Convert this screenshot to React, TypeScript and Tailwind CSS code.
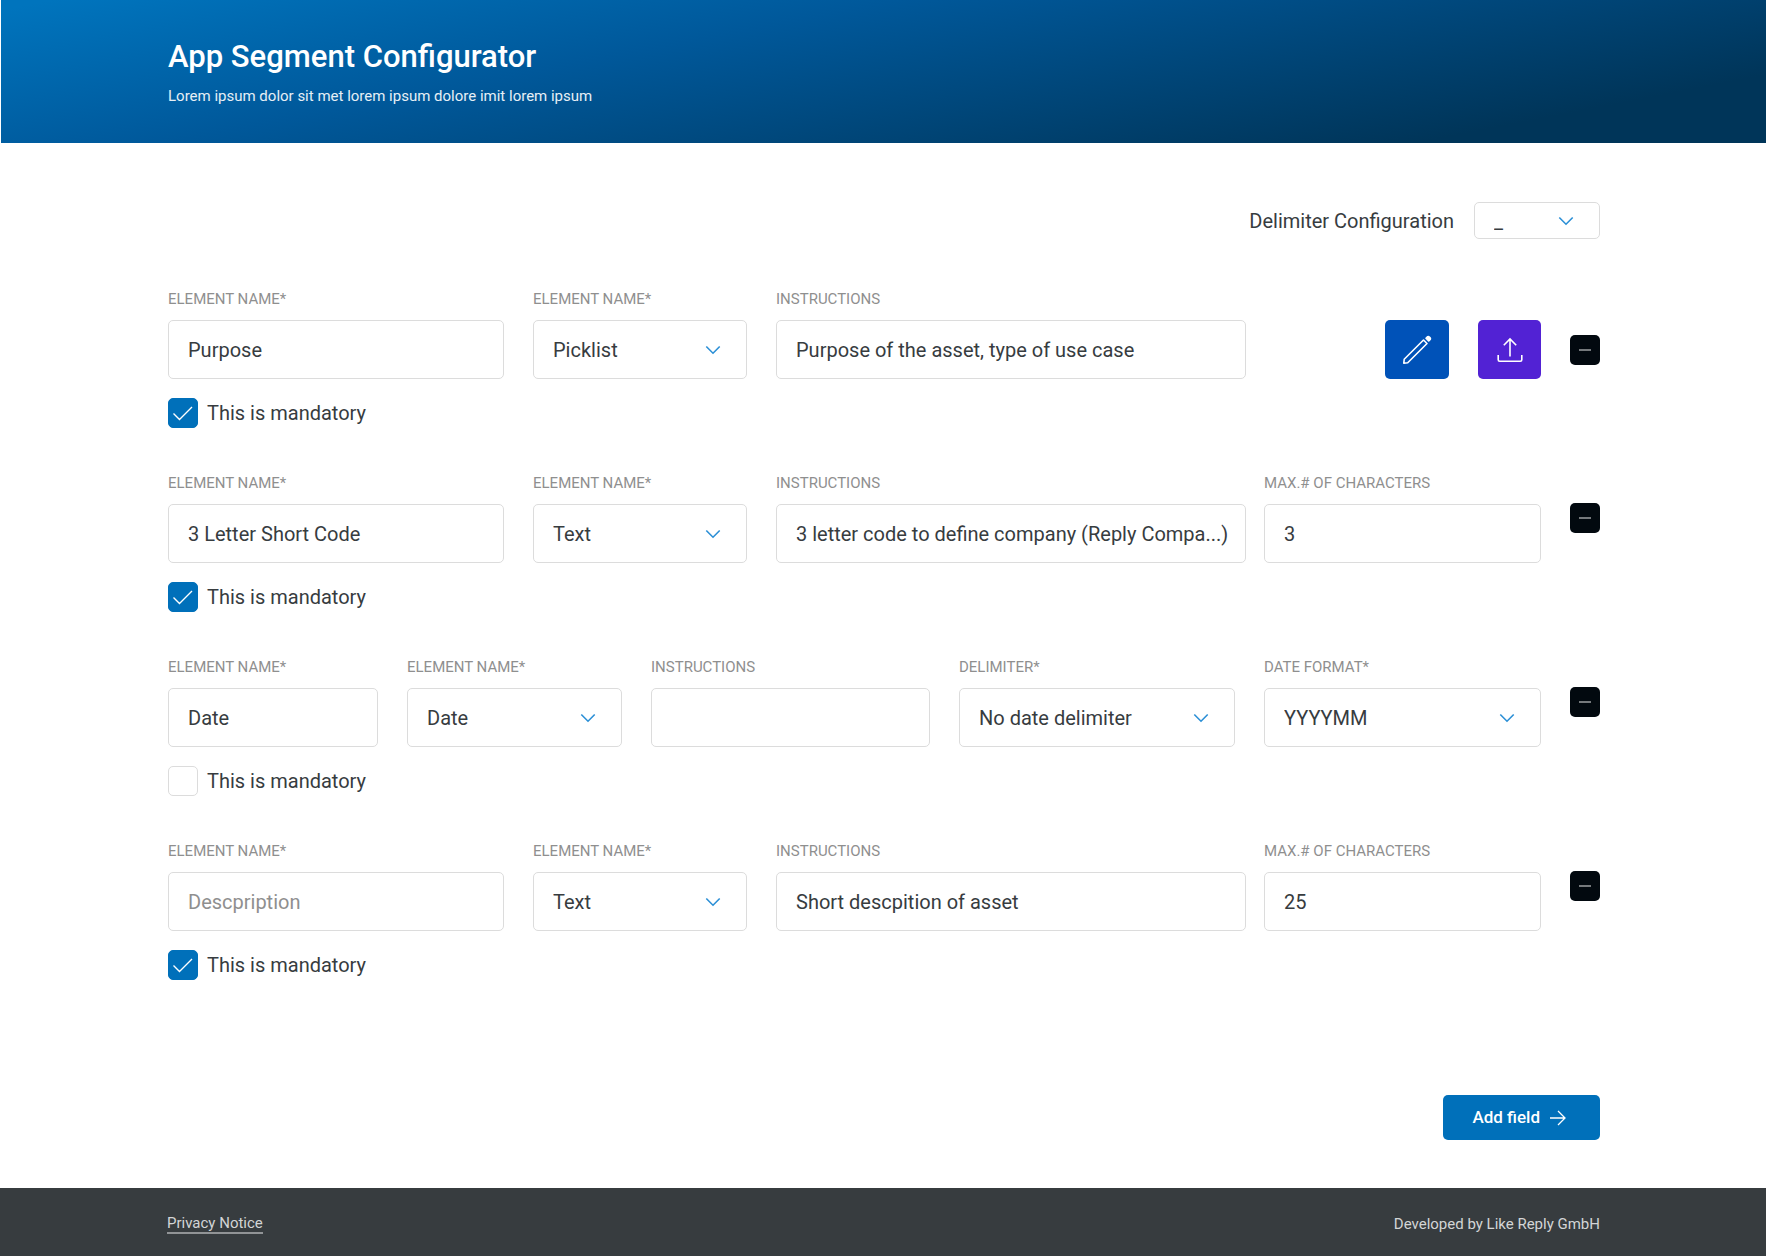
import { useId, useState, type ReactNode } from "react";

const fieldBox =
  "h-[59px] w-full rounded-[5px] border border-[#dcdcdc] bg-white pl-[19px] text-[20px] text-[#373c3f] placeholder:text-[#8f8f8f] focus:outline-2 focus:outline-[#0070ba]";

function Chevron() {
  return (
    <svg
      className="pointer-events-none absolute top-1/2 right-[26px] -translate-y-1/2"
      width="16"
      height="10"
      viewBox="0 0 16 10"
      fill="none"
      stroke="#2b8fd6"
      strokeWidth="1.6"
      aria-hidden="true"
    >
      <path d="M1.300 1.500 8 8.200l6.700-6.700" />
    </svg>
  );
}

function Label({ id, children }: { id: string; children: ReactNode }) {
  return (
    <label htmlFor={id} className="mb-[11px] block text-[15px] leading-5 whitespace-nowrap text-[#8f8f8f]">
      {children}
    </label>
  );
}

function TextField({ label, value = "", placeholder }: { label: string; value?: string; placeholder?: string }) {
  const id = useId();
  return (
    <div>
      <Label id={id}>{label}</Label>
      <input id={id} type="text" defaultValue={value} placeholder={placeholder} className={fieldBox + " pr-4"} />
    </div>
  );
}

function SelectField({ label, value, options }: { label: string; value: string; options: string[] }) {
  const id = useId();
  return (
    <div>
      <Label id={id}>{label}</Label>
      <div className="relative">
        <select id={id} defaultValue={value} className={fieldBox + " appearance-none pr-12"}>
          {options.map((o) => (
            <option key={o}>{o}</option>
          ))}
        </select>
        <Chevron />
      </div>
    </div>
  );
}

const types = ["Picklist", "Text", "Date"];

function RemoveButton() {
  return (
    <button
      type="button"
      aria-label="Remove field"
      className="flex size-[30px] items-center justify-center rounded-[5px] bg-[#02090f]"
    >
      <span className="h-[2px] w-3 bg-[#75797c]" />
    </button>
  );
}

function Mandatory({ initial }: { initial: boolean }) {
  const [checked, setChecked] = useState(initial);
  return (
    <label className="mt-[19px] flex w-fit items-center gap-[9px] text-[20px] leading-[30px] text-[#373c3f]">
      <span className="relative size-[30px]">
        <input
          type="checkbox"
          checked={checked}
          onChange={(e) => setChecked(e.target.checked)}
          className="block size-[30px] appearance-none rounded-[5px] border border-[#dcdcdc] bg-white checked:border-[#0070ba] checked:bg-[#0070ba]"
        />
        {checked && (
          <svg
            className="pointer-events-none absolute inset-0"
            width="30"
            height="30"
            viewBox="0 0 30 30"
            fill="none"
            stroke="#fff"
            strokeWidth="1.4"
            aria-hidden="true"
          >
            <path d="M5.5 15.5 11.5 21.5 24 9" />
          </svg>
        )}
      </span>
      This is mandatory
    </label>
  );
}

function PicklistRow() {
  return (
    <section>
      <div className="grid grid-cols-[336fr_214fr_765fr_30px] gap-[29px]">
        <TextField label="ELEMENT NAME*" value="Purpose" />
        <SelectField label="ELEMENT NAME*" value="Picklist" options={types} />
        <div className="grid grid-cols-[470fr_277fr] gap-[18px]">
          <TextField label="INSTRUCTIONS" value="Purpose of the asset, type of use case" />
          <div className="flex items-end justify-end gap-[29px]">
            <button
              type="button"
              aria-label="Edit picklist"
              className="flex h-[59px] w-16 items-center justify-center rounded-[5px] bg-[#0052b8]"
            >
              <svg
                width="32"
                height="32"
                viewBox="0 0 32 32"
                fill="none"
                stroke="#fff"
                strokeWidth="1.6"
                strokeLinejoin="round"
                aria-hidden="true"
              >
                <path d="M2.800 29.200 3.200 25.300 22.500 6 26 9.500 6.700 28.800Z" />
                <path d="M25 4.300 26.700 2.700Q27.500 2.200 28.300 3L29.200 3.900Q29.800 4.700 29.200 5.500L27.700 7Z" fill="#fff" />
              </svg>
            </button>
            <button
              type="button"
              aria-label="Upload picklist"
              className="flex h-[59px] w-[63px] items-center justify-center rounded-[5px] bg-[#5222d4]"
            >
              <svg width="28" height="28" viewBox="0 0 28 28" fill="none" stroke="#fff" strokeWidth="1.6" aria-hidden="true">
                <path d="M14 20.500V3M7.800 9.200 14 3l6.200 6.200" />
                <path d="M2.200 19v4.800a1.500 1.500 0 0 0 1.500 1.500h20.600a1.500 1.500 0 0 0 1.500-1.500V19" />
              </svg>
            </button>
          </div>
        </div>
        <div className="pt-[46px]">
          <RemoveButton />
        </div>
      </div>
      <Mandatory initial />
    </section>
  );
}

function TextRow({ name, instructions, max }: { name: string; instructions: string; max: string }) {
  return (
    <section>
      <div className="grid grid-cols-[336fr_214fr_765fr_30px] gap-[29px]">
        <TextField label="ELEMENT NAME*" value={name} placeholder="Descpription" />
        <SelectField label="ELEMENT NAME*" value="Text" options={types} />
        <div className="grid grid-cols-[470fr_277fr] gap-[18px]">
          <TextField label="INSTRUCTIONS" value={instructions} />
          <TextField label="MAX.# OF CHARACTERS" value={max} />
        </div>
        <div className="pt-[30px]">
          <RemoveButton />
        </div>
      </div>
      <Mandatory initial />
    </section>
  );
}

function DateRow() {
  return (
    <section>
      <div className="grid grid-cols-[210fr_215fr_279fr_276fr_277fr_30px] gap-[29px]">
        <TextField label="ELEMENT NAME*" value="Date" />
        <SelectField label="ELEMENT NAME*" value="Date" options={types} />
        <TextField label="INSTRUCTIONS" />
        <SelectField label="DELIMITER*" value="No date delimiter" options={["No date delimiter", "-", "_"]} />
        <SelectField label="DATE FORMAT*" value="YYYYMM" options={["YYYYMM", "YYYYMMDD"]} />
        <div className="pt-[30px]">
          <RemoveButton />
        </div>
      </div>
      <Mandatory initial={false} />
    </section>
  );
}

export default function App() {
  return (
    <div className="flex min-h-screen flex-col bg-white font-['Roboto',sans-serif] text-[#373c3f]">
      <header className="ml-px bg-[linear-gradient(169deg,#0074bd_2%,#00589a_36%,#003559_86%)] pt-[38px] pr-[166px] pb-[36px] pl-[167px] text-white">
        <h1 className="text-[31px] leading-[38px] font-medium">App Segment Configurator</h1>
        <p className="mt-[10px] text-[15px] leading-[21px] text-[#e6eff6]">
          Lorem ipsum dolor sit met lorem ipsum dolore imit lorem ipsum
        </p>
      </header>

      <main className="flex flex-1 flex-col pt-[59px] pr-[166px] pb-12 pl-[168px]">
        <div className="flex items-center justify-end gap-5">
          <label htmlFor="delimiter" className="text-[20px] leading-6">
            Delimiter Configuration
          </label>
          <div className="relative">
            <select
              id="delimiter"
              defaultValue="_"
              className="block h-[37px] w-[126px] appearance-none rounded-[5px] border border-[#dcdcdc] bg-white pl-[19px] text-[20px]"
            >
              <option>_</option>
              <option>-</option>
            </select>
            <Chevron />
          </div>
        </div>

        <form className="mt-[50px] flex flex-col gap-[45px]">
          <PicklistRow />
          <TextRow name="3 Letter Short Code" instructions="3 letter code to define company (Reply Compa...)" max="3" />
          <DateRow />
          <TextRow name="" instructions="Short descpition of asset" max="25" />
        </form>

        <button
          type="button"
          className="mt-auto flex h-[45px] items-center gap-[10px] self-end rounded-[5px] bg-[#0070ba] pr-[34px] pl-[29px] text-[17px] font-medium text-white"
        >
          Add field
          <svg width="16" height="16" viewBox="0 0 16 16" fill="none" stroke="#fff" strokeWidth="1.3" aria-hidden="true">
            <path d="M0 8h15M8 1l7 7-7 7" />
          </svg>
        </button>
      </main>

      <footer className="flex h-[68px] items-center justify-between bg-[#373c3f] pt-1 pr-[166px] pl-[167px] text-[15px] leading-5 text-[#d3d5d6]">
        <a href="#privacy" className="border-b-2 border-[#919496] leading-[18px]">
          Privacy Notice
        </a>
        <span>Developed by Like Reply GmbH</span>
      </footer>
    </div>
  );
}
